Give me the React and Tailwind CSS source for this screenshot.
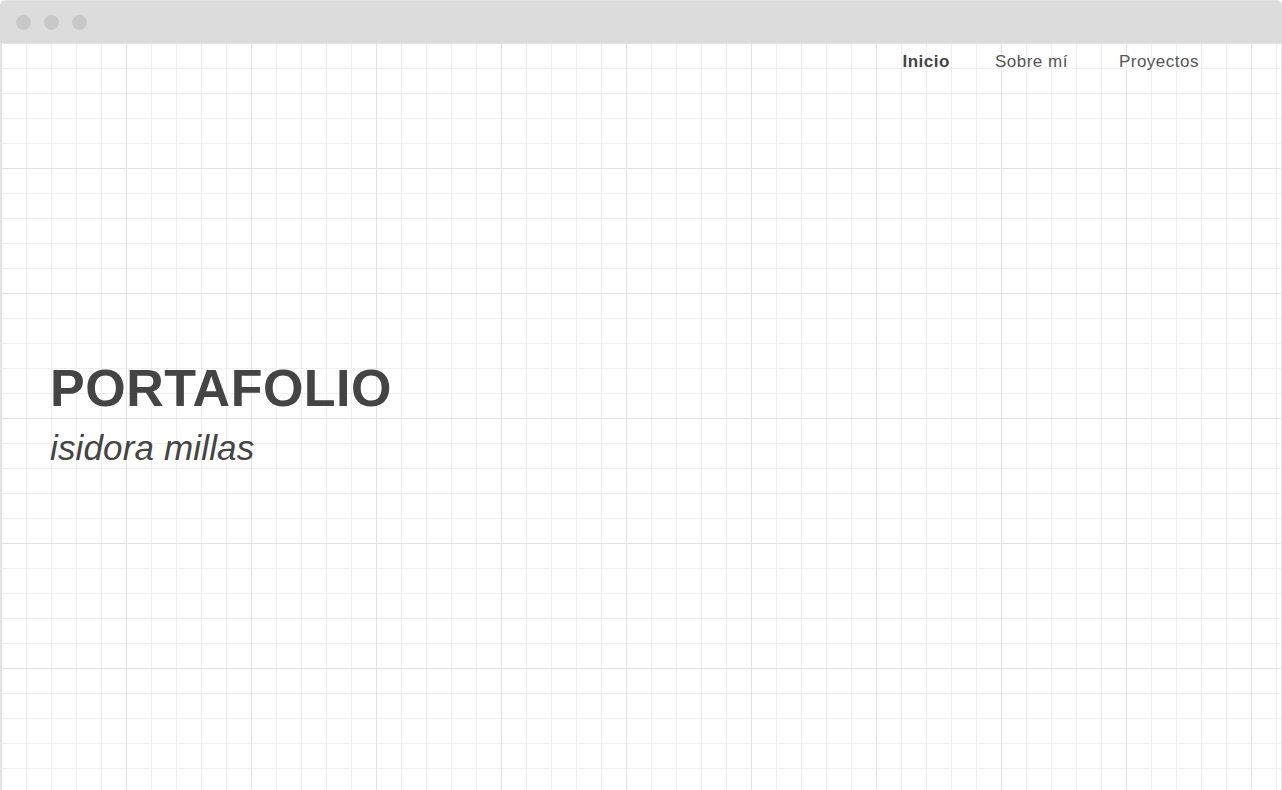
import React from 'react';

const links = [
  { label: 'Inicio', active: true, gap: '' },
  { label: 'Sobre mí', active: false, gap: 'ml-[45px]' },
  { label: 'Proyectos', active: false, gap: 'ml-[51px]' },
];

const App = () => {
  return (
    <div className="w-full h-[790px] flex flex-col bg-white overflow-hidden font-['Liberation_Sans',Arial,sans-serif] text-[#444]">
      {/* Window bar */}
      <div className="h-[43px] shrink-0 bg-[#dcdcdc] border-t border-[#e6e6e6] rounded-t-[5px] flex items-center pl-4 gap-[13px]">
        <span className="w-[15px] h-[15px] rounded-full bg-[#c8c8c8]"></span>
        <span className="w-[15px] h-[15px] rounded-full bg-[#c8c8c8]"></span>
        <span className="w-[15px] h-[15px] rounded-full bg-[#c8c8c8]"></span>
      </div>

      {/* Grid canvas */}
      <div className="flex-1 border-x border-[#e3e3e3] bg-white bg-[linear-gradient(to_right,#e2e2e2_1px,transparent_1px),linear-gradient(to_bottom,#e2e2e2_1px,transparent_1px),linear-gradient(to_right,#efefef_1px,transparent_1px),linear-gradient(to_bottom,#efefef_1px,transparent_1px)] bg-size-[125px_125px,125px_125px,25px_25px,25px_25px]">
        <nav className="flex justify-end pt-[7px] pr-[82px]">
          {links.map((l) => (
            <a
              key={l.label}
              href="#"
              className={`${l.gap} text-[17px] leading-6 tracking-[0.5px] ${l.active ? 'font-bold tracking-[0.3px] text-[#444]' : 'text-[#555]'}`}
            >
              {l.label}
            </a>
          ))}
        </nav>

        <div className="mt-[288px] pl-[49px]">
          <h1 className="text-[52px] leading-none font-bold tracking-[0.5px] text-[#444]">PORTAFOLIO</h1>
          <p className="mt-4 text-[35px] leading-none italic tracking-[0.15px] text-[#444]">isidora millas</p>
        </div>
      </div>
    </div>
  );
};

export default App;
